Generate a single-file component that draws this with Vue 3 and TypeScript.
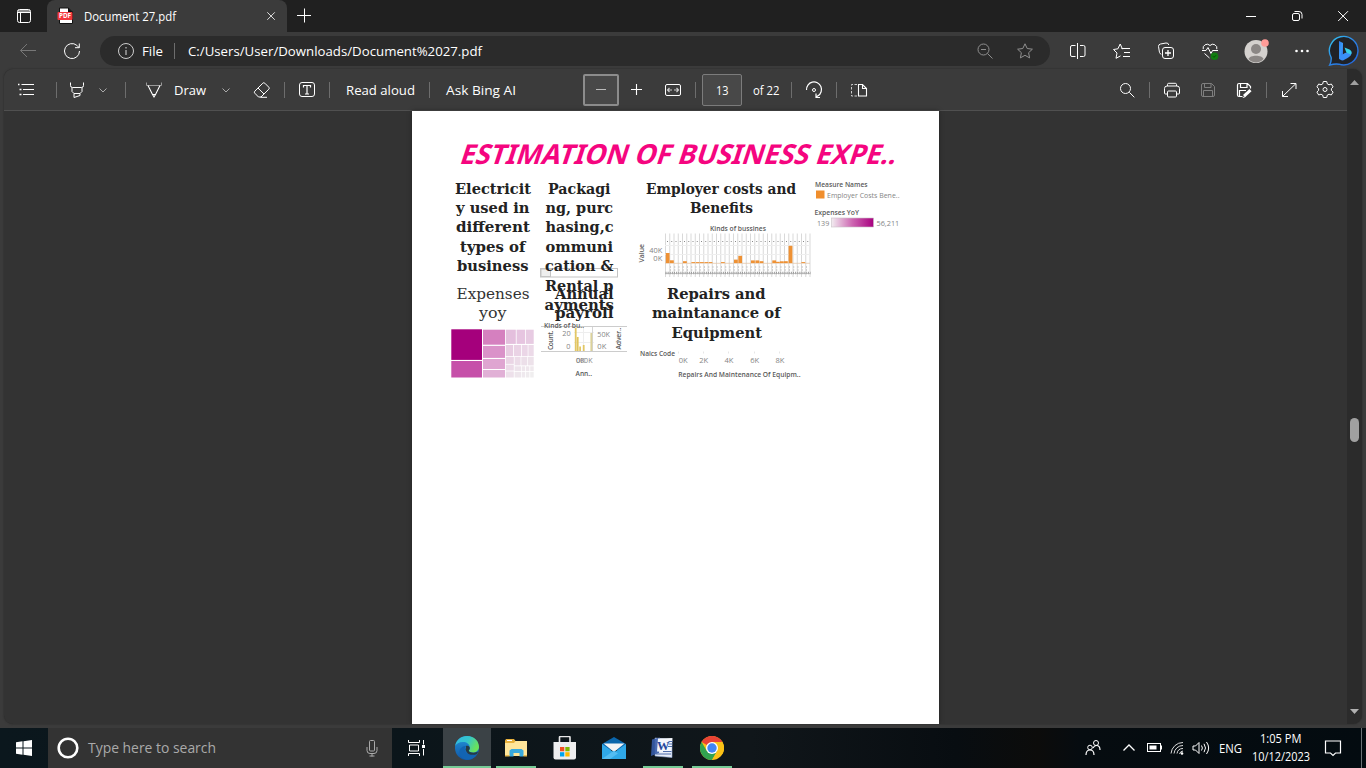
<script setup lang="ts">
import { h } from 'vue'

interface FitProps { t: string; w: number; size: number; color?: string }

// Single-line label drawn at a fixed advance width.
const Fit = (p: FitProps) =>
  h('svg', { width: p.w, height: 20, style: 'overflow:visible;display:block;flex:none' }, [
    h('text', {
      x: 0, y: 15, 'font-size': p.size, fill: p.color ?? '#fff', textLength: p.w,
      lengthAdjust: 'spacingAndGlyphs', 'font-family': '"Open Sans","Noto Sans",sans-serif',
    }, p.t),
  ])

type Line = [text: string, left: number, right: number, baseline: number]

const headings: Line[] = [
  ['Electricit', 455, 531, 193.5], ['y used in', 456, 529.5, 213], ['different', 456, 530, 232.4],
  ['types of', 460, 525.5, 251.8], ['business', 457, 528.5, 271.2],
  ['Packagi', 548, 610.5, 193.5], ['ng, purc', 545.5, 613, 213], ['hasing,c', 545.5, 613.5, 232.4],
  ['ommuni', 545.5, 613, 251.8], ['cation &', 545, 613.5, 271.2], ['Rental p', 545, 613.5, 290.8],
  ['ayments', 544.5, 614, 310.3], ['Annual', 555, 613.5, 298.5], ['payroll', 555, 613.5, 318],
  ['Employer costs and', 646, 796, 193.5], ['Benefits', 690, 753, 213],
  ['Repairs and', 667, 765.5, 298.5], ['maintanance of', 652, 780.5, 318], ['Equipment', 671.5, 762, 337.5],
]
const lightHeadings: Line[] = [['Expenses', 456.5, 529.5, 298.5], ['yoy', 479, 506.5, 318]]
const captions: Line[] = [
  ['Measure Names', 815, 867.5, 187], ['Expenses YoY', 814.5, 859, 215], ['Kinds of bussines', 710, 766, 230.5],
  ['Kinds of bu..', 544, 584, 328.2], ['Ann..', 575.5, 592, 376.3], ['Naics Code', 640, 675, 355.8],
  ['Repairs And Maintenance Of Equipm..', 678.3, 800.5, 377],
]
const ticks: Line[] = [
  ['Employer Costs Bene..', 827, 899.5, 197.6], ['139', 817, 829.3, 226], ['56,211', 876.5, 899.3, 226],
  ['40K', 649.3, 662.3, 253], ['0K', 653.3, 662.3, 261], ['20', 562.3, 570.7, 336], ['0', 566.3, 570.5, 349],
  ['50K', 597.3, 610, 337], ['0K', 597.3, 606.3, 349], ['0K', 576, 585, 363], ['000K', 576, 592.5, 363],
  ['0K', 678.7, 687.7, 363], ['2K', 699.2, 708.2, 363], ['4K', 724.5, 733.5, 363],
  ['6K', 750.2, 759.2, 363], ['8K', 775.5, 784.5, 363],
]

const expenseBars: [number, number][] = [
  [665.8, 10], [670, 2.7], [683, 1.8], [691.4, 0.9], [695.8, 0.9], [700, 0.9], [704.4, 0.9], [708.6, 0.9], [721, 0.9],
  [734, 3.4], [738.3, 7.2], [751, 2.6], [755.4, 2.6], [759.6, 1.8], [772.3, 2.6], [776, 1.2], [780, 1.7],
  [784, 1.8], [788.6, 17.2], [801.4, 0.9],
]
const gridLines = Array.from({ length: 35 }, (_, i) => 665.5 + i * 4.25)

type Tile = [x: number, y: number, w: number, h: number, fill: string]
const tiles: Tile[] = [
  [451.3, 329.3, 30.7, 30.6, '#a5007c'], [451.3, 361, 30.7, 16.5, '#c650a9'],
  [483, 329.7, 22, 15, '#d580bf'], [483, 345.9, 22, 12, '#da92c9'], [483, 359, 22, 10, '#dfa5d1'], [483, 370, 22, 7.5, '#e1b0d6'],
  [505.8, 329.7, 10, 14.2, '#e4bfdd'], [516.6, 329.7, 8.6, 14.2, '#e6c5e0'], [526, 329.7, 7.7, 14.2, '#e7cbe2'],
  [505.8, 345, 7.2, 11.2, '#e8cde2'], [513.8, 345, 7.4, 11.2, '#ead3e5'], [522, 345, 5.7, 11.2, '#ebd6e7'], [528.4, 345, 5.3, 11.2, '#ecdae8'],
  [505.8, 357, 8, 6.9, '#ead5e5'], [505.8, 364.6, 8, 6, '#ecdbe8'], [505.8, 371.4, 8, 6.1, '#ede0ea'],
  [514.6, 357, 6, 8.4, '#ecdce8'], [521.3, 357, 6, 8.4, '#ecdfe9'], [528, 357, 5.7, 8.4, '#ede2ea'],
  [514.6, 366.3, 6.4, 4.8, '#ede3eb'], [521.7, 366.3, 3.5, 4.8, '#eee6ec'], [526, 366.3, 3.4, 4.8, '#eee6ec'], [530.2, 366.3, 3.5, 4.8, '#efe9ed'],
  [514.6, 371.9, 6.4, 5.6, '#eee6ec'], [521.7, 371.9, 3.5, 5.6, '#efe9ee'], [526, 371.9, 3.4, 5.6, '#efebee'], [530.2, 371.9, 3.5, 5.6, '#f0eeef'],
]
const payrollBars: [number, number, string][] = [
  [574.8, 328, '#e2c765'], [576.8, 337, '#e0c35b'], [579.2, 346.5, '#e2c765'], [582.8, 345, '#e2c765'], [590.4, 333, '#dcd29a'],
]
</script>

<template>
  <div class="screen">
    <div class="titlebar">
      <div class="cell tabs-btn">
        <svg class="ic" viewBox="0 0 20 20"><rect x="3.500" y="3.500" width="13" height="13" rx="2" /><path d="M4 5h12M4 6.500h12M6.500 7v9" /></svg>
      </div>
      <div class="tab">
        <svg class="pdf" viewBox="0 0 18 18">
          <path d="M2.500 1h9l4 4v11.500h-13z" fill="#fff" stroke="#111" /><path d="M11.500 1v4h4" fill="#111" stroke="#111" />
          <rect x="0.500" y="5" width="15" height="8" rx="1" fill="#f2383c" />
          <text x="2" y="11.400" font-size="6.300" font-weight="700" textLength="12" fill="#fff">PDF</text>
        </svg>
        <Fit t="Document 27.pdf" :w="92" :size="12" />
        <svg class="ic tab-close" viewBox="0 0 20 20"><path d="M6.300 6.300l7.500 7.500M13.800 6.300l-7.500 7.500" stroke="#ddd" /></svg>
      </div>
      <div class="cell new-tab"><svg class="ic" viewBox="0 0 20 20"><path d="M3 9.500h14M10.500 2.500v14" /></svg></div>
      <div class="cell win first"><svg class="ic" viewBox="0 0 20 20"><path d="M5 10.500h10" /></svg></div>
      <div class="cell win"><svg class="ic" viewBox="0 0 20 20"><rect x="5.500" y="7.500" width="7" height="7" rx="1.500" /><path d="M7.500 5.500h4.500a3 3 0 0 1 3 3v4" /></svg></div>
      <div class="cell win"><svg class="ic" viewBox="0 0 20 20"><path d="M5.200 5.200l9.800 9.800M15 5.200L5.200 15" /></svg></div>
    </div>

    <div class="navbar">
      <div class="cell back"><svg class="ic" viewBox="0 0 20 20"><path d="M18 9.500H2.500M9 3L2.500 9.500 9 16" stroke="#777" /></svg></div>
      <div class="cell reload"><svg class="ic" viewBox="0 0 20 20"><path d="M17.500 10A7.500 7.500 0 1 1 14.800 4.300l2.200 2.200M17.300 2.500v4.200h-4.300" /></svg></div>
      <div class="pill">
        <svg class="ic" viewBox="0 0 20 20"><circle cx="10" cy="10" r="7.500" stroke="#ccc" /><path d="M10 9v5M10 6v1.500" stroke="#ddd" /></svg>
        <Fit class="file" t="File" :w="21" :size="13.300" />
        <span class="sep bar" />
        <Fit class="url" t="C:/Users/User/Downloads/Document%2027.pdf" :w="294" :size="13.300" />
        <svg class="ic zoomed" viewBox="0 0 20 20"><circle cx="8.500" cy="8.500" r="5.500" stroke="#8f8f8f" /><path d="M12.500 12.500l5 5M6 8.500h5" stroke="#8f8f8f" /></svg>
        <svg class="ic star" viewBox="0 0 20 20"><path d="M10 2.800l2.200 4.700 5.200.7-3.800 3.500 1 5.200L10 14.300l-4.600 2.600 1-5.200-3.800-3.500 5.200-.7z" stroke="#909090" /></svg>
      </div>
      <div class="cell c44 after-pill"><svg class="ic" viewBox="0 0 20 20"><path d="M7.500 4.500H4a1.500 1.500 0 0 0-1.500 1.500v8A1.500 1.500 0 0 0 4 15.500h3.500M12 4.500h3.500A1.500 1.500 0 0 1 17 6v8a1.500 1.500 0 0 1-1.500 1.500H12M9.500 2v16" /></svg></div>
      <div class="cell c44"><svg class="ic" viewBox="0 0 20 20"><path d="M10.500 8.200L8.200 3 5.900 7.800l-4.400.7 3.500 3.500-1 5.300 4.500-2.400M9.500 7.500H18M12 11.500h6M11 15.500h7" /></svg></div>
      <div class="cell c44"><svg class="ic" viewBox="0 0 20 20"><path d="M5 13.500l-1.500-2L2.500 5.500A2.500 2.500 0 0 1 4.500 3l5.500-1a2.500 2.500 0 0 1 2.800 2" /><rect x="6.500" y="6.500" width="11" height="11" rx="2.500" /><path d="M12 9v6M9 12h6" stroke-width="1.300" /></svg></div>
      <div class="cell c44"><svg class="ic" viewBox="0 0 20 20"><path d="M3.200 8.200A4 4 0 0 1 10 4.500a4 4 0 0 1 6.800 3.700M2 9.500h4l2-3 3 6 1.500-3H18M4.500 12.500l5 4.500" /><circle cx="14.500" cy="15.300" r="3.800" fill="#107c10" stroke="none" /><path d="M13 15.300l1 1 2-2" stroke="#054d05" /></svg></div>
      <div class="cell c48"><svg class="avatar" viewBox="0 0 26 26"><circle cx="13" cy="13.500" r="11.500" fill="#d4d1ce" /><circle cx="13" cy="11" r="5" fill="#8b8785" /><path d="M5.500 21c1-4.500 14-4.500 15 0-3.500 4.500-11.500 4.500-15 0z" fill="#8b8785" /><circle cx="22" cy="5" r="3.800" fill="#ff9c98" /></svg></div>
      <div class="cell c44"><svg class="ic" viewBox="0 0 20 20"><g fill="#fff" stroke="none"><circle cx="4.500" cy="10" r="1.300" /><circle cx="10" cy="10" r="1.300" /><circle cx="15.500" cy="10" r="1.300" /></g></svg></div>
      <div class="cell c40">
        <svg class="bing" viewBox="0 0 32 32">
          <defs>
            <linearGradient id="ring" x1="0" y1="0" x2="1" y2="1"><stop offset="0" stop-color="#35c5ee" /><stop offset=".5" stop-color="#2b83e6" /><stop offset="1" stop-color="#2263dc" /></linearGradient>
            <linearGradient id="bee" x1="0" y1="0" x2="1" y2="1"><stop offset="0" stop-color="#2c7df0" /><stop offset=".5" stop-color="#3a9af8" /><stop offset="1" stop-color="#2b62dc" /></linearGradient>
          </defs>
          <path d="M1.700 30q1.800-3.500 1.500-7.300A14.300 14.300 0 1 1 11 29.200q-4.500-.5-9.300.8z" fill="#202227" stroke="url(#ring)" stroke-width="1.400" />
          <path d="M11 6l4 2v12.500l-4 4z" fill="url(#bee)" /><path d="M11 21.500l6-3.500 6.500-1.500c.5 4-2 5.500-8.500 9-2.500 0-4-1.500-4-4z" fill="#3a8ff8" />
          <path d="M16.500 12.500l5 2c2 1 2.500 3 1.500 5l-4.500-1.700z" fill="#37cfe5" />
        </svg>
      </div>
    </div>

    <div class="viewer">
      <div class="main">
        <div class="toolbar">
          <div class="cell c44"><svg class="ic" viewBox="0 0 20 20"><path d="M5.500 4.500H18M7 9.500H18M7 14.500H18" /><path d="M2 4.500h1.500M3.500 9.500h2M3.500 14.500h2" stroke-width="1.500" /></svg></div>
          <span class="sep s8" />
          <div class="cell c40"><svg class="ic" viewBox="0 0 20 20"><path d="M3.500 2.500v3a2 2 0 0 0 2 2h9a2 2 0 0 0 2-2v-3M5 7.500v4l2 2h6l2-2v-4M7 13.500v4l6-2v-2" /></svg></div>
          <div class="cell c12"><svg class="ic" viewBox="0 0 20 20"><path d="M6.500 8.500l3.500 3.500 3.500-3.500" stroke="#aaa" /></svg></div>
          <span class="sep s16" />
          <div class="cell c32 m12"><svg class="ic" viewBox="0 0 20 20"><path d="M2.500 2.500v3h15v-3" stroke="#999" /><path d="M4 5.500L8.500 14.500l1.500 2.500 1.500-2.500L16 5.500M8.500 14.500h3" stroke-width="1.100" /></svg></div>
          <Fit class="m4" t="Draw" :w="32" :size="13.300" />
          <div class="cell c16 m12"><svg class="ic" viewBox="0 0 20 20"><path d="M6.500 8.500l3.500 3.500 3.500-3.500" stroke="#aaa" /></svg></div>
          <div class="cell c32 m12"><svg class="ic" viewBox="0 0 20 20"><path d="M2.800 11.200l8-8a1.400 1.400 0 0 1 2 0l4 4a1.400 1.400 0 0 1 0 2L9 17H6.500l-3.700-3.800a1.400 1.400 0 0 1 0-2zM6 8l6 6M8.500 17.300H15" /></svg></div>
          <span class="sep s6" />
          <div class="cell c44"><svg class="ic" viewBox="0 0 20 20"><rect x="2.500" y="2.500" width="15" height="14" rx="2.500" /><path d="M6.500 7.500V5.500h7v2M10 5.500v8.500M8 14h4" stroke-width="1.200" /></svg></div>
          <span class="sep" />
          <Fit class="m16" t="Read aloud" :w="69" :size="13.300" />
          <span class="sep s14" />
          <Fit class="m16" t="Ask Bing AI" :w="70" :size="13.300" />
          <div class="minus"><svg class="ic" viewBox="0 0 20 20"><path d="M5 9.500h10" stroke="#bbb" /></svg></div>
          <div class="cell c34"><svg class="ic" viewBox="0 0 20 20"><path d="M5 9.500h11M10.500 4v11" stroke-width="1.100" /></svg></div>
          <div class="cell c40"><svg class="ic" viewBox="0 0 20 20"><rect x="2.500" y="4.500" width="15" height="11" rx="1.500" /><path d="M4.500 10h4.500M11 10h4.500M6.500 8L4.500 10l2 2M13.500 8l2 2-2 2" stroke="#ccc" stroke-width="1.200" /></svg></div>
          <span class="sep s2" />
          <div class="pagebox"><Fit t="13" :w="12.500" :size="12.500" /></div>
          <Fit class="m11" t="of 22" :w="26.500" :size="12.500" />
          <span class="sep s11h" />
          <div class="cell c44"><svg class="ic" viewBox="0 0 20 20"><path d="M2.500 10A7.500 7.500 0 1 1 14 15.800l-1.500 1M12 13.500v4h4" stroke-width="1.200" /><circle cx="10" cy="10" r="1.500" /></svg></div>
          <span class="sep" />
          <div class="cell c42"><svg class="ic" viewBox="0 0 20 20"><path d="M10.500 4.500h4l4 4v7.500h-8zM14.500 4.500v4h4" stroke-width="1.100" /><path d="M9 4.500H3.500V16H9" stroke-dasharray="2.500 1.500" stroke="#ccc" /></svg></div>
          <div class="cell c44 push"><svg class="ic" viewBox="0 0 20 20"><circle cx="8.500" cy="8.500" r="5" /><path d="M12.300 12.300l5 5" /></svg></div>
          <span class="sep" />
          <div class="cell c44"><svg class="ic" viewBox="0 0 20 20"><path d="M5.500 6V4.500a1.200 1.200 0 0 1 1.200-1.200h6.600a1.200 1.200 0 0 1 1.200 1.200V6M5.500 14H3.500a1 1 0 0 1-1-1V8.500A2.500 2.500 0 0 1 5 6h10a2.500 2.500 0 0 1 2.500 2.500V13a1 1 0 0 1-1 1h-2" /><rect x="5.500" y="11" width="9" height="6" rx="1" /></svg></div>
          <div class="cell c28 dim"><svg class="ic" viewBox="0 0 20 20"><path d="M3.500 5A1.500 1.500 0 0 1 5 3.500h8.500l3 3V15a1.500 1.500 0 0 1-1.500 1.500H5A1.500 1.500 0 0 1 3.500 15zM6.500 3.500v4h6.500v-4M5.500 16.500v-6h9v6" /></svg></div>
          <div class="cell c44"><svg class="ic" viewBox="0 0 20 20"><path d="M8.500 16.500H5A1.500 1.500 0 0 1 3.500 15V5A1.500 1.500 0 0 1 5 3.500h8.500l3 3v2M6.500 3.500v4h6.500v-4M5.500 16.500v-6H12" stroke-width="1.200" /><path d="M16.500 10.200l-6.500 6" stroke-width="3" /><path d="M8.800 17.500l2.500-.8" /></svg></div>
          <span class="sep" />
          <div class="cell c44"><svg class="ic" viewBox="0 0 20 20"><path d="M11.500 3.500H17v5.500M17 3.500L3.500 16.500M3.500 11v5.500H9" /></svg></div>
          <div class="cell c28"><svg class="ic gear" viewBox="0 0 20 20"><path d="M8.300 1.500h3.400l.6 2.400 1.700.9 2.300-.8 1.800 2.900L16.400 8.700v1.600l1.700 1.800-1.800 2.900-2.300-.8-1.700.9-.6 2.400H8.300l-.6-2.400-1.700-.9-2.300.8-1.800-2.900 1.700-1.800V8.700L1.900 6.900l1.800-2.900 2.300.8 1.700-.9z" stroke-linejoin="round" /><circle cx="10" cy="9.500" r="2" /></svg></div>
        </div>

        <div class="canvas">
          <div class="page">
            <svg width="527" height="613" viewBox="412 111 527 613">
              <defs>
                <linearGradient id="ramp"><stop offset="0" stop-color="#f2ecf0" /><stop offset=".5" stop-color="#cd65b1" /><stop offset="1" stop-color="#a8007f" /></linearGradient>
              </defs>
              <text class="title" transform="translate(458.500 164) skewX(-18)" textLength="436" lengthAdjust="spacingAndGlyphs">ESTIMATION OF BUSINESS EXPE..</text>

              <g fill="none" stroke="#c4c4c4"><rect x="540.500" y="268.500" width="77" height="8.500" /><rect x="541" y="269" width="9.500" height="7.500" fill="#eee" /></g>

              <g stroke="#cfcfcf" stroke-width=".8">
                <path v-for="x in gridLines" :key="x" :d="`M${x} 233.500V277`" />
              </g>
              <path d="M665 245.500h145M665 254.500h145" stroke="#eee" />
              <path d="M667 241.500h143" stroke="#888" stroke-dasharray="1 3.250" />
              <path d="M665 263.300h145" stroke="#e4c8ac" stroke-width=".8" />
              <path d="M670 267h140M670 270h140" stroke="#aaa" stroke-dasharray="1 3.250" />
              <path d="M665.500 273h145" stroke="#999" stroke-width="2.500" stroke-dasharray="1 1.125" />
              <path d="M665 273.500h145" stroke="#aaa" stroke-width=".7" />
              <rect v-for="[x, height] in expenseBars" :key="x" :x="x" :y="263 - height" width="3.800" :height="height" fill="#ee9134" />

              <rect x="816" y="190.500" width="8.500" height="8" fill="#f08e2c" />
              <rect x="831.500" y="218" width="42" height="9" fill="url(#ramp)" stroke="#c9c0c6" stroke-width=".6" />

              <rect v-for="([x, y, w, height, fill], i) in tiles" :key="i" :x="x" :y="y" :width="w" :height="height" :fill="fill" />

              <path d="M541 326.500h86M541 351.500h86" stroke="#ccc" />
              <path d="M574 332.500h20M574 342.500h20M583.500 328v23" stroke="#eee" />
              <path d="M592.500 327v24" stroke="#d5d5d5" />
              <rect v-for="[x, y, fill] in payrollBars" :key="x" :x="x" :y="y" width="1.800" :height="351 - y" :fill="fill" />
              <path d="M678.500 351.500v2M703.500 351.500v2M728.500 351.500v2M754.500 351.500v2M779.500 351.500v2" stroke="#e6e6e6" />

              <text v-for="([t, l, r, b], i) in headings" :key="'h' + i" class="heading" :x="l" :y="b" :textLength="r - l" lengthAdjust="spacingAndGlyphs">{{ t }}</text>
              <text v-for="([t, l, r, b], i) in lightHeadings" :key="'l' + i" class="heading light" :x="l" :y="b" :textLength="r - l" lengthAdjust="spacingAndGlyphs">{{ t }}</text>
              <text v-for="([t, l, r, b], i) in captions" :key="'c' + i" class="caption" :x="l" :y="b" :textLength="r - l" lengthAdjust="spacingAndGlyphs">{{ t }}</text>
              <text v-for="([t, l, r, b], i) in ticks" :key="'t' + i" class="tick" :x="l" :y="b" :textLength="r - l" lengthAdjust="spacingAndGlyphs">{{ t }}</text>
              <text class="caption" transform="translate(643.800 262.500) rotate(-90)" textLength="18.500">Value</text>
              <text class="caption" transform="translate(552.500 350) rotate(-90)" textLength="19.500">Count.</text>
              <text class="caption" transform="translate(621 349.500) rotate(-90)" textLength="22">Adver..</text>
            </svg>
          </div>
        </div>
      </div>
      <div class="scroll">
        <svg width="15" height="12" viewBox="0 0 15 12"><path d="M3 9l4.500-5L12 9z" fill="#a0a0a0" /></svg>
        <div class="thumb" />
        <svg class="down" width="15" height="12" viewBox="0 0 15 12"><path d="M3 3l4.500 5L12 3z" fill="#b0b0b0" /></svg>
      </div>
    </div>

    <div class="taskbar">
      <div class="cell start"><svg width="16" height="16" viewBox="0 0 16 16" fill="#fff"><path d="M0 2.300L6.500 1.300V7.500H0zM7.500 1.200L16 0v7.500H7.500zM0 8.500h6.500v6.200L0 13.700zM7.500 8.500H16V16l-8.500-1.200z" /></svg></div>
      <div class="search">
        <svg width="22" height="22" viewBox="0 0 22 22"><circle cx="11" cy="11" r="9.300" fill="none" stroke="#fff" stroke-width="2.600" /></svg>
        <Fit class="ask" t="Type here to search" :w="128" :size="14" color="#aaa" />
        <svg class="ic mic" viewBox="0 0 20 20"><rect x="7.500" y="2.500" width="5" height="10.500" rx="1" stroke="#aaa" /><path d="M5 9v3.500q0 3 3 3h4q3 0 3-3V9M10 15.500v3M7.500 18h5" stroke="#aaa" /></svg>
      </div>
      <div class="cell view"><svg class="ic" viewBox="0 0 20 20"><path d="M2.500 2v2.500h11V2M2.500 18v-2.500h11V18M3.500 7h9v6h-9zM17.500 2v4.500M17.500 11v6.500" /><rect x="16" y="7" width="3" height="3" fill="#fff" stroke="none" /></svg></div>
      <div class="cell edge run">
        <svg width="24" height="24" viewBox="0 0 24 24">
          <defs><linearGradient id="eg" x1="0" y1="0" x2="1" y2=".4"><stop offset="0" stop-color="#31b8e4" /><stop offset=".55" stop-color="#35c5cb" /><stop offset="1" stop-color="#69e35b" /></linearGradient><linearGradient id="eb" x1="0" y1="0" x2="0" y2="1"><stop offset="0" stop-color="#2394da" /><stop offset="1" stop-color="#0f56a6" /></linearGradient></defs>
          <circle cx="12" cy="12" r="12" fill="url(#eb)" />
          <path d="M.2 10C1 4 6 0 12 0c7.500 0 12 5.500 12 11 0 3.500-3 5.500-6 5.500-2.500 0-4.200-1-4.200-2 0-.7 1-1.200 1-3C14.800 8 11.500 6 8 6 4 6 1.200 7.800.2 10z" fill="url(#eg)" />
          <path d="M8 22.500c-3.500-2-5-6.500-2.500-10 1-1.500 3.500-3 5.500-2.500-2 2-1.500 6 1 8 3 2 7 1.500 10-.2-2.500 5.200-8.500 7.500-14 4.700z" fill="#1264b2" />
          <path d="M11 10c2.500-1 4 1 3.800 2.500-.3 1.500-1 1.500-1 2.300 0 1 2 2.200 5 2 1.800 0 3.200-.5 4.200-1.200-.3 1.400-.9 2.200-1.500 2.600-3 1-8 1-9.700-2-1-1.500-1.600-2.900-.8-4.200z" fill="#263b45" />
        </svg>
      </div>
      <div class="cell app a40 run g5">
        <svg width="22" height="20" viewBox="0 0 22 20"><path d="M0 2.500L1 1h8l1.500 2H22v5H0z" fill="#e8b13c" /><rect x="2" y="2" width="5" height="1" fill="#fff" /><path d="M0 5h9l1.500-2H22v15H0z" fill="#ffe59a" /><path d="M4.500 18.500v-6l2-1.500h10l2 1.500v6h-4V15h-6v3.500z" fill="#39a9dd" /><path d="M0 17h4.500v1.500H0zM18.500 17H22v1.500h-3.500z" fill="#e6b84e" /></svg>
      </div>
      <div class="cell app a48 g5">
        <svg width="24" height="24" viewBox="0 0 24 24"><path d="M6.500 7V1.500q0-1 1-1h8.500q1 0 1 1V7" fill="none" stroke="#e8e8e8" stroke-width="1.600" /><path d="M.5 6h22.500v15.500q0 2-2 2H2.500q-2 0-2-2z" fill="#eeeeef" /><path d="M7 11h4.300v4.300H7z" fill="#f25022" /><path d="M12.300 11h4.300v4.300h-4.300z" fill="#7fba00" /><path d="M7 16.200h4.300v4.300H7z" fill="#00a4ef" /><path d="M12.300 16.200h4.300v4.300h-4.300z" fill="#ffb900" /></svg>
      </div>
      <div class="cell app a48 mail">
        <svg width="24" height="22" viewBox="0 0 24 22"><path d="M0 7L12 0l12 7v6H0z" fill="#0b66ac" /><path d="M1.500 6.500h21L12 15z" fill="#f3f4f6" /><path d="M0 7l12 8.500L24 7v15H0z" fill="#2fa8e8" /><path d="M0 22l12-8.500 4 3L8 22z" fill="#53bcf2" /></svg>
      </div>
      <div class="cell app a40 run g6">
        <svg width="24" height="22" viewBox="0 0 24 22"><path d="M4 1l17 1.500v18L4 19z" fill="#e9eef8" stroke="#8da4d0" stroke-width=".6" /><path d="M1 2.500L9 .5 8 16 0 19z" fill="#375ca8" opacity=".9" /><path d="M7 1.500L21.500 1l-1.500 14L6 14.500z" fill="#f4f7fc" /><path d="M17.500 4.500h4M17.500 7h4M17 9.500h4M12 14.500h8.500M5 17h15" stroke="#4f6dab" /><text x="6" y="12.500" font-size="12.500" font-weight="700" font-family="Liberation Serif" fill="#24479b">W</text></svg>
      </div>
      <div class="cell app a40 run g9">
        <svg width="24" height="24" viewBox="0 0 24 24"><circle cx="12" cy="12" r="12" fill="#fbc116" /><path d="M12 12L1.600 6A12 12 0 0 1 22.400 6z" fill="#ea4335" /><path d="M1.600 6A12 12 0 0 0 12 24l5.200-9L12 12 6.800 15z" fill="#31a350" /><path d="M12 6h10.400a12 12 0 0 1 0 12L12 24l5.200-9z" fill="#fbc116" /><circle cx="12" cy="12" r="6" fill="#fff" /><circle cx="12" cy="12" r="4.700" fill="#4285f4" /></svg>
      </div>
      <div class="tray">
        <div class="cell people"><svg class="ic" viewBox="0 0 20 20"><circle cx="13" cy="5" r="2.500" /><circle cx="7" cy="9.500" r="2.300" /><path d="M3 17q0-5 4-5t4 5M10 10q1.200-2.500 3.500-2.500 3.500 0 3.500 4.500" stroke-width="1.200" /></svg></div>
        <div class="cell up"><svg class="ic" viewBox="0 0 20 20"><path d="M4.500 12.500L10 7l5.500 5.500" stroke-width="1.300" /></svg></div>
        <div class="cell batt"><svg class="ic" viewBox="0 0 20 20"><rect x="2.500" y="5.500" width="13" height="8" /><rect x="4.500" y="7.500" width="7" height="4" fill="#fff" stroke="none" /><path d="M16.500 7.500v4" /></svg></div>
        <div class="cell wifi"><svg class="ic" viewBox="0 0 20 20"><path d="M4 15.500A12 12 0 0 1 16 4.500M7 15.500A9 9 0 0 1 16 7.500M10 15.500a6 6 0 0 1 6-5M12.500 16a4 4 0 0 1 3.500-3" stroke="#ddd" /><circle cx="15" cy="15.500" r="1.300" fill="#fff" stroke="none" /></svg></div>
        <div class="cell vol"><svg class="ic" viewBox="0 0 20 20"><path d="M2 8h2.500L8 4.500v11L4.500 12H2zM10.500 7.500q1.800 2.500 0 5M13 5.800q3 4.200 0 8.400M15.500 4q4.300 6 0 12" /></svg></div>
        <Fit class="lang" t="ENG" :w="23" :size="12" />
        <div class="clock"><Fit t="1:05 PM" :w="41.500" :size="12" /><Fit t="10/12/2023" :w="58" :size="12" /></div>
        <div class="cell note"><svg class="ic" viewBox="0 0 20 20"><path d="M2.500 3h15v12h-5L10 17.500 7.500 15h-5z" stroke-width="1.200" /></svg></div>
        <span class="peek" />
      </div>
    </div>
  </div>
</template>

<style>
html, body { margin: 0; overflow: hidden; background: #3b3b3b; }
</style>

<style scoped>
.screen { width: 1366px; height: 768px; display: flex; flex-direction: column; background: #3b3b3b; font-family: "Open Sans", "Noto Sans", sans-serif; overflow: hidden; }
.cell { display: flex; align-items: center; justify-content: center; flex: none; }
.ic { width: 20px; height: 20px; fill: none; stroke: #fff; stroke-width: 1; flex: none; }
.sep { width: 1px; height: 16px; background: #6d6d6d; flex: none; }

.titlebar { height: 32px; display: flex; background: #202020; flex: none; }
.tabs-btn { width: 47px; }
.tab { width: 240px; box-sizing: border-box; display: flex; align-items: center; background: #3b3b3b; border-radius: 8px 8px 0 0; padding-left: 10px; }
.pdf { width: 18px; height: 18px; margin-right: 9px; font-family: "Open Sans", sans-serif; }
.tab-close { margin-left: 85px; }
.new-tab { width: 34px; }
.win { width: 46px; }
.first { margin-left: auto; }

.navbar { height: 37px; display: flex; align-items: center; flex: none; }
.back { width: 56px; }
.reload { width: 32px; }
.pill { width: 950px; height: 30px; margin-left: 12px; box-sizing: border-box; padding-left: 16px; border-radius: 15px; background: #2b2b2b; display: flex; align-items: center; }
.file { margin-left: 6px; }
.bar { margin-left: 11px; }
.url { margin-left: 13px; }
.zoomed { margin-left: 493px; }
.star { margin-left: 20px; }
.after-pill { margin-left: 6px; }
.avatar { width: 26px; height: 26px; }
.bing { width: 32px; height: 32px; }

.c12 { width: 12px; } .c16 { width: 16px; } .c28 { width: 28px; } .c32 { width: 32px; } .c34 { width: 34px; }
.c40 { width: 40px; } .c42 { width: 42px; } .c44 { width: 44px; } .c48 { width: 48px; }
.s2 { margin-left: 2px; } .s6 { margin-left: 6px; } .s8 { margin-left: 8px; } .s11h { margin-left: 11.5px; }
.s14 { margin-left: 14px; } .s16 { margin-left: 16px; }
.m4 { margin-left: 4px; } .m11 { margin-left: 11px; } .m12 { margin-left: 12px; } .m16 { margin-left: 16px; }
.push { margin-left: auto; }
.dim { opacity: .35; }

.viewer { height: 655px; margin: 0 4px; display: flex; border-radius: 9px; overflow: hidden; box-shadow: 0 0 2px #262626; background: #333; flex: none; }
.main { width: 1343px; display: flex; flex-direction: column; }
.toolbar { height: 42px; box-sizing: border-box; padding-right: 8px; display: flex; align-items: center; background: #3b3b3b; border-bottom: 1px solid #505050; }
.minus { width: 36px; height: 32px; box-sizing: border-box; margin-left: 67px; border: 2px solid #8c8c8c; border-radius: 2px; background: #484848; display: flex; align-items: center; justify-content: center; }
.pagebox { width: 40px; height: 32px; box-sizing: border-box; margin-left: 6px; border: 1px solid #7c7c7c; border-radius: 2px; background: #484848; display: flex; align-items: center; justify-content: center; }
.canvas { flex: 1; display: flex; padding-left: 408px; }
.page { width: 527px; height: 613px; background: #fff; box-shadow: 0 0 4px #222; overflow: hidden; }
.page svg { display: block; }
.scroll { width: 15px; background: #2b2b2b; display: flex; flex-direction: column; align-items: center; padding: 7px 0 6px; box-sizing: border-box; }
.thumb { width: 9px; height: 24px; margin-top: 330px; border-radius: 5px; background: #a0a0a0; }
.down { margin-top: auto; }

.title { font: normal 700 27.500px "Noto Sans", "Open Sans", sans-serif; fill: #f5057f; }
.heading { font: 700 15px "DejaVu Serif", serif; fill: #222; }
.light { font-weight: 400; fill: #333; }
.caption { font: 600 6.800px "Open Sans", sans-serif; fill: #5a5a5a; }
.tick { font: 400 7px "Open Sans", sans-serif; fill: #858585; }

.taskbar { height: 40px; margin-top: 4px; display: flex; background: linear-gradient(90deg, #0b171d 0, #0b151a 30%, #10161a 55%, #080d11 70%, #0c0c0b 76%, #060c10 79%, #030b10 100%); flex: none; }
.start { width: 48px; }
.search { width: 344px; box-sizing: border-box; padding-left: 9px; display: flex; align-items: center; background: #333; }
.ask { margin-left: 9px; }
.mic { margin-left: 146px; }
.view { width: 51px; padding-right: 3px; box-sizing: border-box; }
.edge { width: 48px; background: #3b4246; }
.run { box-shadow: inset 0 -2px #76cb96; }
.a40 { width: 40px; } .a48 { width: 48px; }
.g5 { margin-left: 5px; } .g6 { margin-left: 6px; } .g9 { margin-left: 9px; }
.mail { padding-left: 2px; box-sizing: border-box; }
.tray { margin-left: auto; display: flex; align-items: center; }
.people { width: 36px; } .up { width: 36px; } .batt { width: 15px; } .wifi { width: 30px; } .vol { width: 18px; }
.lang { margin-left: 9px; }
.clock { width: 66px; height: 40px; margin-left: 6px; padding-bottom: 2px; box-sizing: border-box; display: flex; flex-direction: column; align-items: center; justify-content: center; }
.clock svg + svg { margin-top: -2px; }
.note { width: 38px; }
.peek { width: 1px; height: 40px; margin: 0 4px 0 9px; background: #6a7175; }
</style>
